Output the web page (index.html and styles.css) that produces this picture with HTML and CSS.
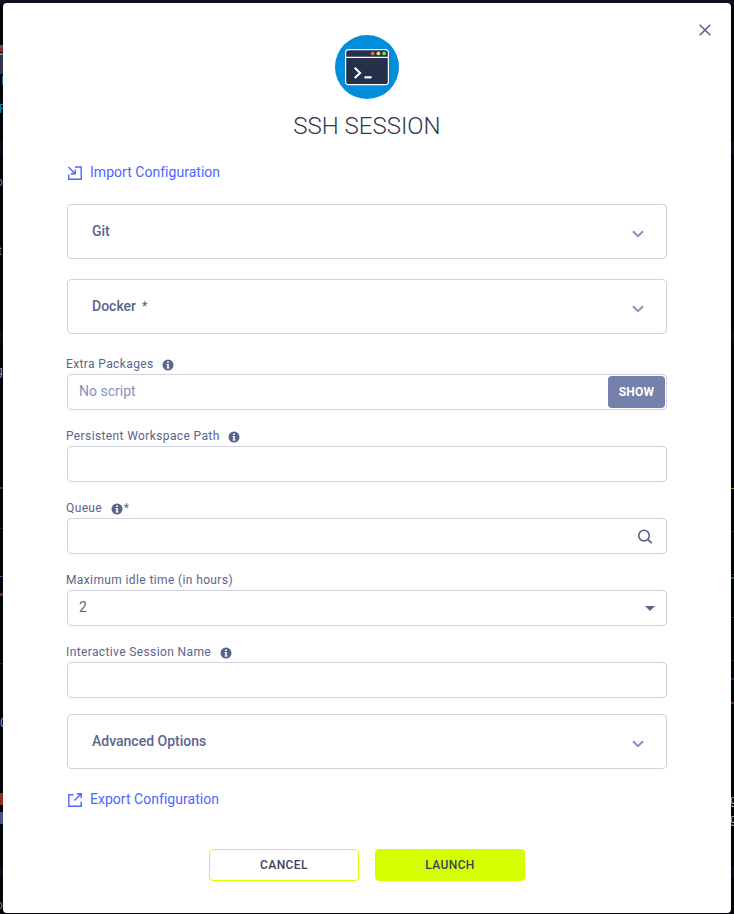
FILE: index.html
```html
<!DOCTYPE html>
<html lang="en">
<head>
<meta charset="utf-8">
<title>SSH Session</title>
<link rel="stylesheet" href="styles.css">
</head>
<body>
<svg class="backdrop" width="734" height="914" aria-hidden="true">
  <rect width="734" height="914" fill="#010308"/>
  <rect width="734" height="4" fill="#100f20"/>
  <path d="M0 142h734v12H0zM0 331h734v12H0zM0 866h734v12H0z" fill="#080d15"/>
  <rect y="45" width="3" height="3" fill="#55556a"/><rect y="48" width="3" height="4" fill="#8c252b"/><rect y="53" width="3" height="2" fill="#777b91"/>
  <rect y="55" width="3" height="19" fill="#2e354d"/><rect x="2" y="76" width="1" height="9" fill="#086a9b"/>
  <g font-family="Roboto, sans-serif" font-size="12">
    <text x="-1" y="113" fill="#1685b1">P</text><text x="-4" y="186" fill="#747893">o</text><text x="-2" y="255" fill="#747893">t</text>
    <text x="-4" y="375" fill="#9298ad">g</text><text x="0" y="727" fill="#9ba0aa">0</text><text x="-4" y="909" fill="#747893">o</text>
    <text x="730" y="804" fill="#aaaeb5">g</text><text x="730" y="823" fill="#aaaeb5">g</text>
  </g>
  <rect y="487" width="3" height="2" fill="#6b2d12"/><rect y="528" width="3" height="1" fill="#222735"/><rect y="576" width="3" height="1" fill="#40558c"/>
  <rect y="593" width="3" height="3" fill="#78293d"/><rect y="663" width="3" height="1" fill="#222735"/>
  <rect y="793" width="3" height="12" fill="#8d2d1d"/><rect y="812" width="3" height="12" fill="#465386"/>
  <rect x="731" y="488" width="3" height="1" fill="#8b9a24"/><path d="M731 531h3v1h-3zM731 574h3v1h-3zM731 617h3v1h-3zM731 660h3v1h-3z" fill="#252b34"/>
  <rect x="731" y="577" width="3" height="2" fill="#1c6529"/><rect x="731" y="678" width="3" height="2" fill="#242448"/><rect x="731" y="702" width="3" height="2" fill="#622d35"/>
</svg>
<svg class="defs" width="0" height="0" aria-hidden="true">
  <symbol id="chevron" viewBox="0 0 12 8"><path d="M1 1.2 6 6.2l5-5" fill="none" stroke="#8492c2" stroke-width="2"/></symbol>
  <symbol id="info" viewBox="0 0 12 12"><circle cx="6" cy="6" r="5.5" fill="#5a658e"/><path d="M5.1 2.5h1.8v1.6H5.1zM4.6 5h2.2v3.6h.7v.9H4.6v-.9h.6V5.9h-.6z" fill="#fff"/></symbol>
</svg>
<main class="dialog" role="dialog">
  <button class="close" aria-label="Close"><svg width="12" height="12" viewBox="0 0 12 12"><path d="m.7.7 10.6 10.6M11.3.7.7 11.3" stroke="#5a658e" stroke-width="1.6"/></svg></button>
  <header class="header">
    <svg width="64" height="64" viewBox="0 0 64 64">
      <circle cx="32" cy="32" r="32" fill="#008edb"/>
      <rect x="10.6" y="14.6" width="42.8" height="35" rx="3.2" fill="#25314a" stroke="#fff" stroke-width="1.2"/>
      <path d="M11 22.4h42.4" stroke="#fff" stroke-width="1.1"/>
      <circle cx="37.7" cy="18.4" r="1.9" fill="#f05b59"/><circle cx="43.4" cy="18.4" r="1.9" fill="#f5e51b"/><circle cx="49.1" cy="18.4" r="1.9" fill="#67de78"/>
      <path d="m19.7 32.7 5.4 5.2-5.4 5.2" fill="none" stroke="#fff" stroke-width="2.1"/><path d="M30.3 42.3h5.5" stroke="#fff" stroke-width="2.2" stroke-linecap="round"/>
    </svg>
    <h1>SSH SESSION</h1>
  </header>
  <a class="config">
    <svg width="16" height="16" viewBox="0 0 16 16" fill="none" stroke="#4d66ff" stroke-width="1.4"><path d="M8 2h6.2v12.2H1.8V9.5M1.4 2.1l6.4 6.4M8.2 4.4v4.4H3.8"/></svg>
    Import Configuration
  </a>
  <section class="panels">
    <div class="panel"><span>Git</span><svg class="chevron" width="12" height="8"><use href="#chevron"/></svg></div>
    <div class="panel"><span class="title">Docker <small>*</small></span><svg class="chevron" width="12" height="8"><use href="#chevron"/></svg></div>
  </section>
  <form class="form">
    <div class="field">
      <label>Extra Packages <svg class="info" width="12" height="12"><use href="#info"/></svg></label>
      <div class="control script"><span>No script</span><button type="button" class="show">SHOW</button></div>
    </div>
    <div class="field">
      <label>Persistent Workspace Path <svg class="info" width="12" height="12"><use href="#info"/></svg></label>
      <div class="control"></div>
    </div>
    <div class="field">
      <label>Queue <svg class="info" width="12" height="12"><use href="#info"/></svg><span class="required">*</span></label>
      <div class="control"><svg class="search" width="16" height="16" viewBox="0 0 16 16" fill="none" stroke="#5a658e"><circle cx="7" cy="6.6" r="5.3" stroke-width="1.6"/><path d="m10.8 10.4 4 3.8" stroke-width="1.8"/></svg></div>
    </div>
    <div class="field">
      <label>Maximum idle time (in hours)</label>
      <div class="control"><span>2</span><svg class="caret" width="10" height="5" viewBox="0 0 10 5"><path d="M0 0h10L5 5z" fill="#5a658e"/></svg></div>
    </div>
    <div class="field">
      <label>Interactive Session Name <svg class="info" width="12" height="12"><use href="#info"/></svg></label>
      <div class="control"></div>
    </div>
  </form>
  <div class="panel advanced"><span>Advanced Options</span><svg class="chevron" width="12" height="8"><use href="#chevron"/></svg></div>
  <a class="config export">
    <svg width="16" height="16" viewBox="0 0 16 16" fill="none" stroke="#4d66ff" stroke-width="1.4"><path d="M6.6 2.7H1.8v11.5h12.4V9.5M7.4 8.6l6.6-6.6M9.8 1.8h4.4v4.4"/></svg>
    Export Configuration
  </a>
  <footer class="actions"><button class="cancel">CANCEL</button><button class="launch">LAUNCH</button></footer>
</main>
</body>
</html>
```
FILE: styles.css
```css
* { box-sizing: border-box; }
html, body { height: 100%; margin: 0; }
body { overflow: hidden; padding: 3px 3px 1px; background: #010308; color: #5a658e; font: 14px/20px Roboto, sans-serif; }
button { padding: 0; border: 0; background: none; font: inherit; }
svg { display: block; flex: none; }
.backdrop { position: absolute; inset: 0; }
.defs { position: absolute; }
.dialog { position: relative; height: 910px; padding: 32px 64px 0; border-radius: 4px; background: #fff; }
.close { position: absolute; top: 21px; right: 20px; }
.header { display: flex; flex-direction: column; align-items: center; }
h1 { margin: 11px 0 0; color: #343848; font-size: 24px; font-weight: 300; line-height: 32px; }
.config { display: flex; align-items: center; gap: 7px; height: 20px; margin-top: 20px; color: #4d66ff; letter-spacing: .03px; }
.config svg { margin-top: 2px; }
.panels { display: grid; gap: 20px; margin-top: 22px; }
.panel { display: flex; align-items: center; justify-content: space-between; height: 55px; padding: 0 22px 2px 24px; border: 1px solid #d1d3e0; border-radius: 4px; font-weight: 500; }
.title { display: flex; align-items: center; }
.panel small { margin-left: 6px; font-size: 12px; }
.chevron { margin-top: 7px; }
.form { margin-top: 20px; }
.field { height: 72px; }
.field label { display: flex; align-items: center; height: 20px; margin-left: -1px; font-size: 12px; letter-spacing: .38px; }
.info { margin: 1px 0 0 8.5px; }
.required { margin-left: 1px; }
.control { display: flex; align-items: center; justify-content: space-between; height: 36px; padding: 0 11px 2px; border: 1px solid #d1d3e0; border-radius: 4px; }
.script { padding: 0 1px 0 11px; color: #8492c2; }
.script span { margin-top: -2px; }
.show { width: 57px; height: 32px; border-radius: 4px; background: #7681ab; color: #fff; font-size: 12px; font-weight: 700; letter-spacing: .2px; }
.search { margin: 3px 2px 0 auto; }
.caret { margin-top: 3px; }
.advanced { margin-top: 0; }
.export { margin-top: 20px; }
.actions { display: flex; justify-content: center; gap: 16px; margin-top: 40px; }
.actions button { width: 150px; height: 32px; border: 1px solid #d3ff00; border-radius: 4px; color: #3b4262; font-size: 12px; font-weight: 500; letter-spacing: .4px; }
.actions .launch { background: #d3ff00; }
```
